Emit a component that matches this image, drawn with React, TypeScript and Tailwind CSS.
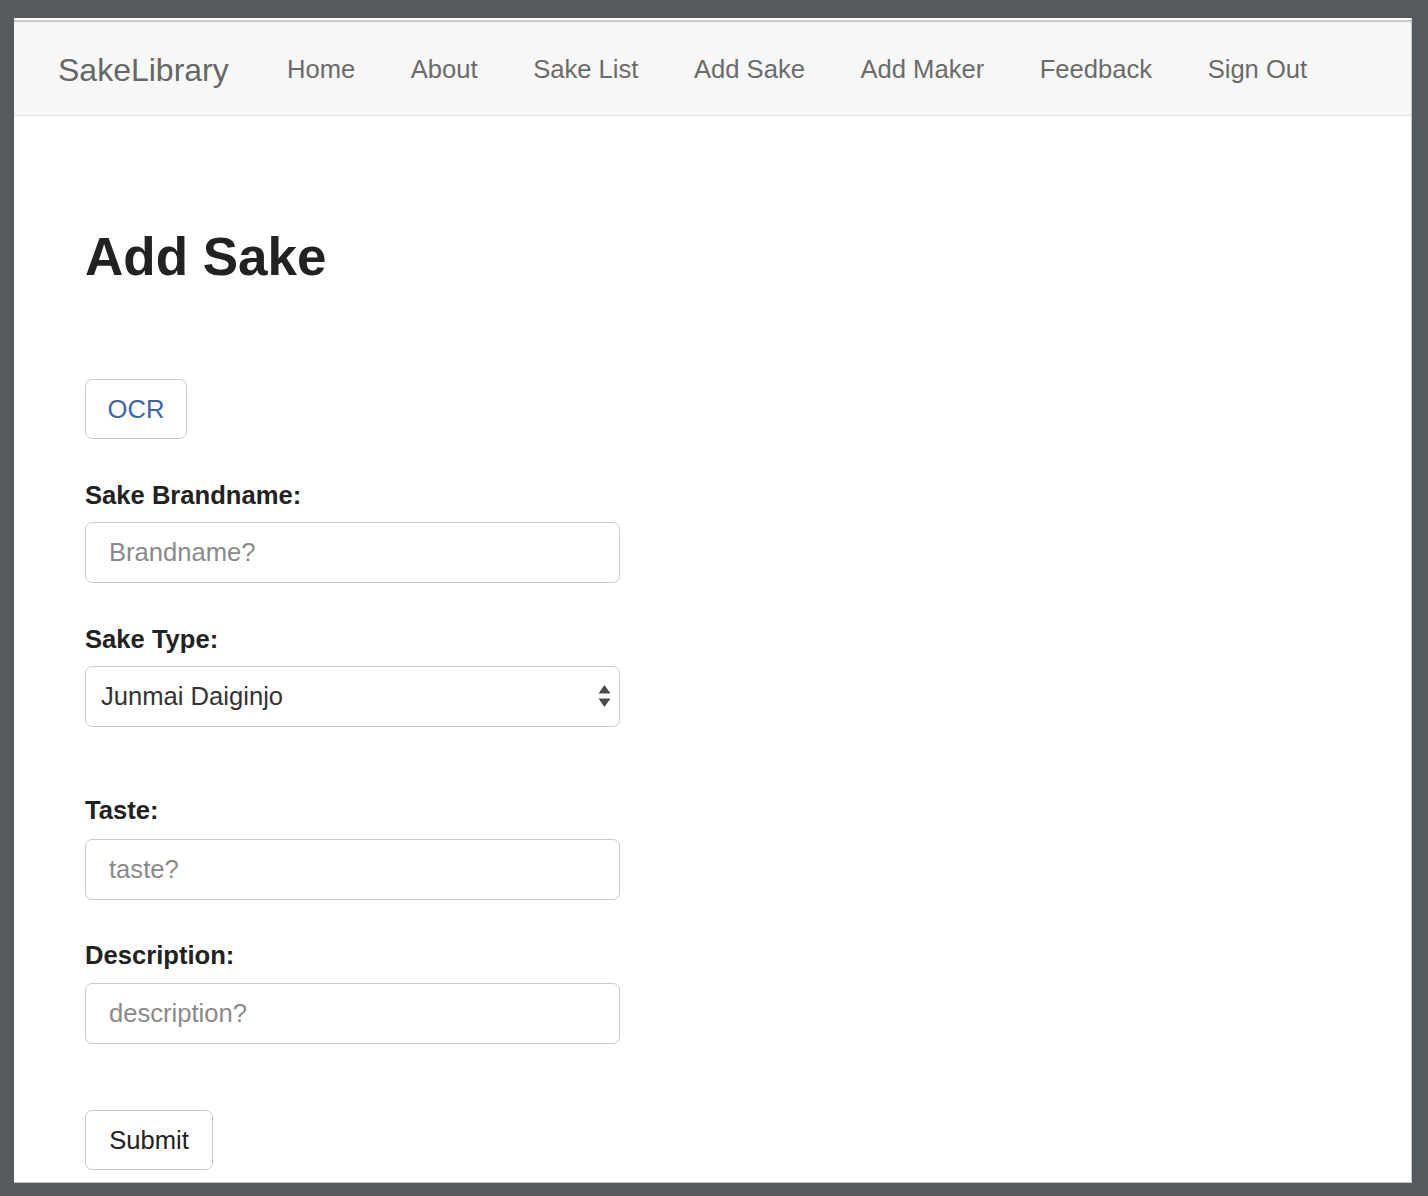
import React from 'react';

const navLinks = ['Home', 'About', 'Sake List', 'Add Sake', 'Add Maker', 'Feedback', 'Sign Out'];

function Label({ children, className = '' }: { children: React.ReactNode; className?: string }) {
  return (
    <label className={`block text-[25.6px] leading-[38px] font-bold text-[#222] ${className}`}>
      {children}
    </label>
  );
}

function TextInput({ placeholder, className = '' }: { placeholder: string; className?: string }) {
  return (
    <input
      type="text"
      placeholder={placeholder}
      className={`block w-[535px] h-[61px] rounded-[7px] border border-[#c9c9c9] bg-white pl-[23px] text-[25.6px] text-[#333] placeholder:text-[#8a8a8a] outline-none ${className}`}
    />
  );
}

export default function App() {
  return (
    <div className="w-[1428px] h-[1196px] bg-[#555a5e] pt-[18px] pl-[14px] font-['Liberation_Sans',Arial,sans-serif]">
      <div className="w-[1398px] h-[1165px] bg-white border-r border-b border-[#c4c4c4] overflow-hidden pt-[2px]">
        {/* Navbar */}
        <nav className="h-[96px] bg-[#f7f7f7] border-t-2 border-[#c9c9c9] border-b border-b-[#e2e2e2] flex items-center pl-[44px] pt-[2px]">
          <span className="w-[174px] shrink-0 text-[32px] text-[#666] leading-none">SakeLibrary</span>
          <ul className="flex items-center gap-[55.5px] ml-[55px]">
            {navLinks.map((link) => (
              <li key={link} className="text-[25.6px] text-[#6b6b6b] leading-none whitespace-nowrap">
                {link}
              </li>
            ))}
          </ul>
        </nav>

        {/* Form */}
        <div className="pl-[71px]">
          <h1 className="mt-[109px] text-[53px] leading-[64px] font-bold text-[#222]">Add Sake</h1>

          <button className="mt-[90px] w-[102px] h-[60px] rounded-[7px] border border-[#c9c9c9] bg-white text-[25.6px] text-[#3f63b0]">
            OCR
          </button>

          <Label className="mt-[37px]">Sake Brandname:</Label>
          <TextInput placeholder="Brandname?" className="mt-[8px]" />

          <Label className="mt-[37px]">Sake Type:</Label>
          <div className="relative mt-[8px] w-[535px]">
            <select
              defaultValue="Junmai Daiginjo"
              className="block w-[535px] h-[61px] appearance-none rounded-[7px] border border-[#c9c9c9] bg-white pl-[15px] text-[25.6px] text-[#333] outline-none">
              <option>Junmai Daiginjo</option>
              <option>Daiginjo</option>
              <option>Junmai Ginjo</option>
              <option>Ginjo</option>
              <option>Junmai</option>
              <option>Honjozo</option>
            </select>
            <svg
              className="absolute left-[513px] top-[19px] pointer-events-none"
              width="13"
              height="23"
              viewBox="0 0 13 23">
              <path d="M6.5 0 L12.5 8.5 L0.5 8.5 Z" fill="#4a4a4a" />
              <path d="M0.5 13.5 L12.5 13.5 L6.5 22 Z" fill="#4a4a4a" />
            </svg>
          </div>

          <Label className="mt-[64px]">Taste:</Label>
          <TextInput placeholder="taste?" className="mt-[10px]" />

          <Label className="mt-[36px]">Description:</Label>
          <TextInput placeholder="description?" className="mt-[9px]" />

          <button className="mt-[66px] w-[128px] h-[60px] rounded-[7px] border border-[#c9c9c9] bg-white text-[25.6px] text-[#222]">
            Submit
          </button>
        </div>
      </div>
    </div>
  );
}
